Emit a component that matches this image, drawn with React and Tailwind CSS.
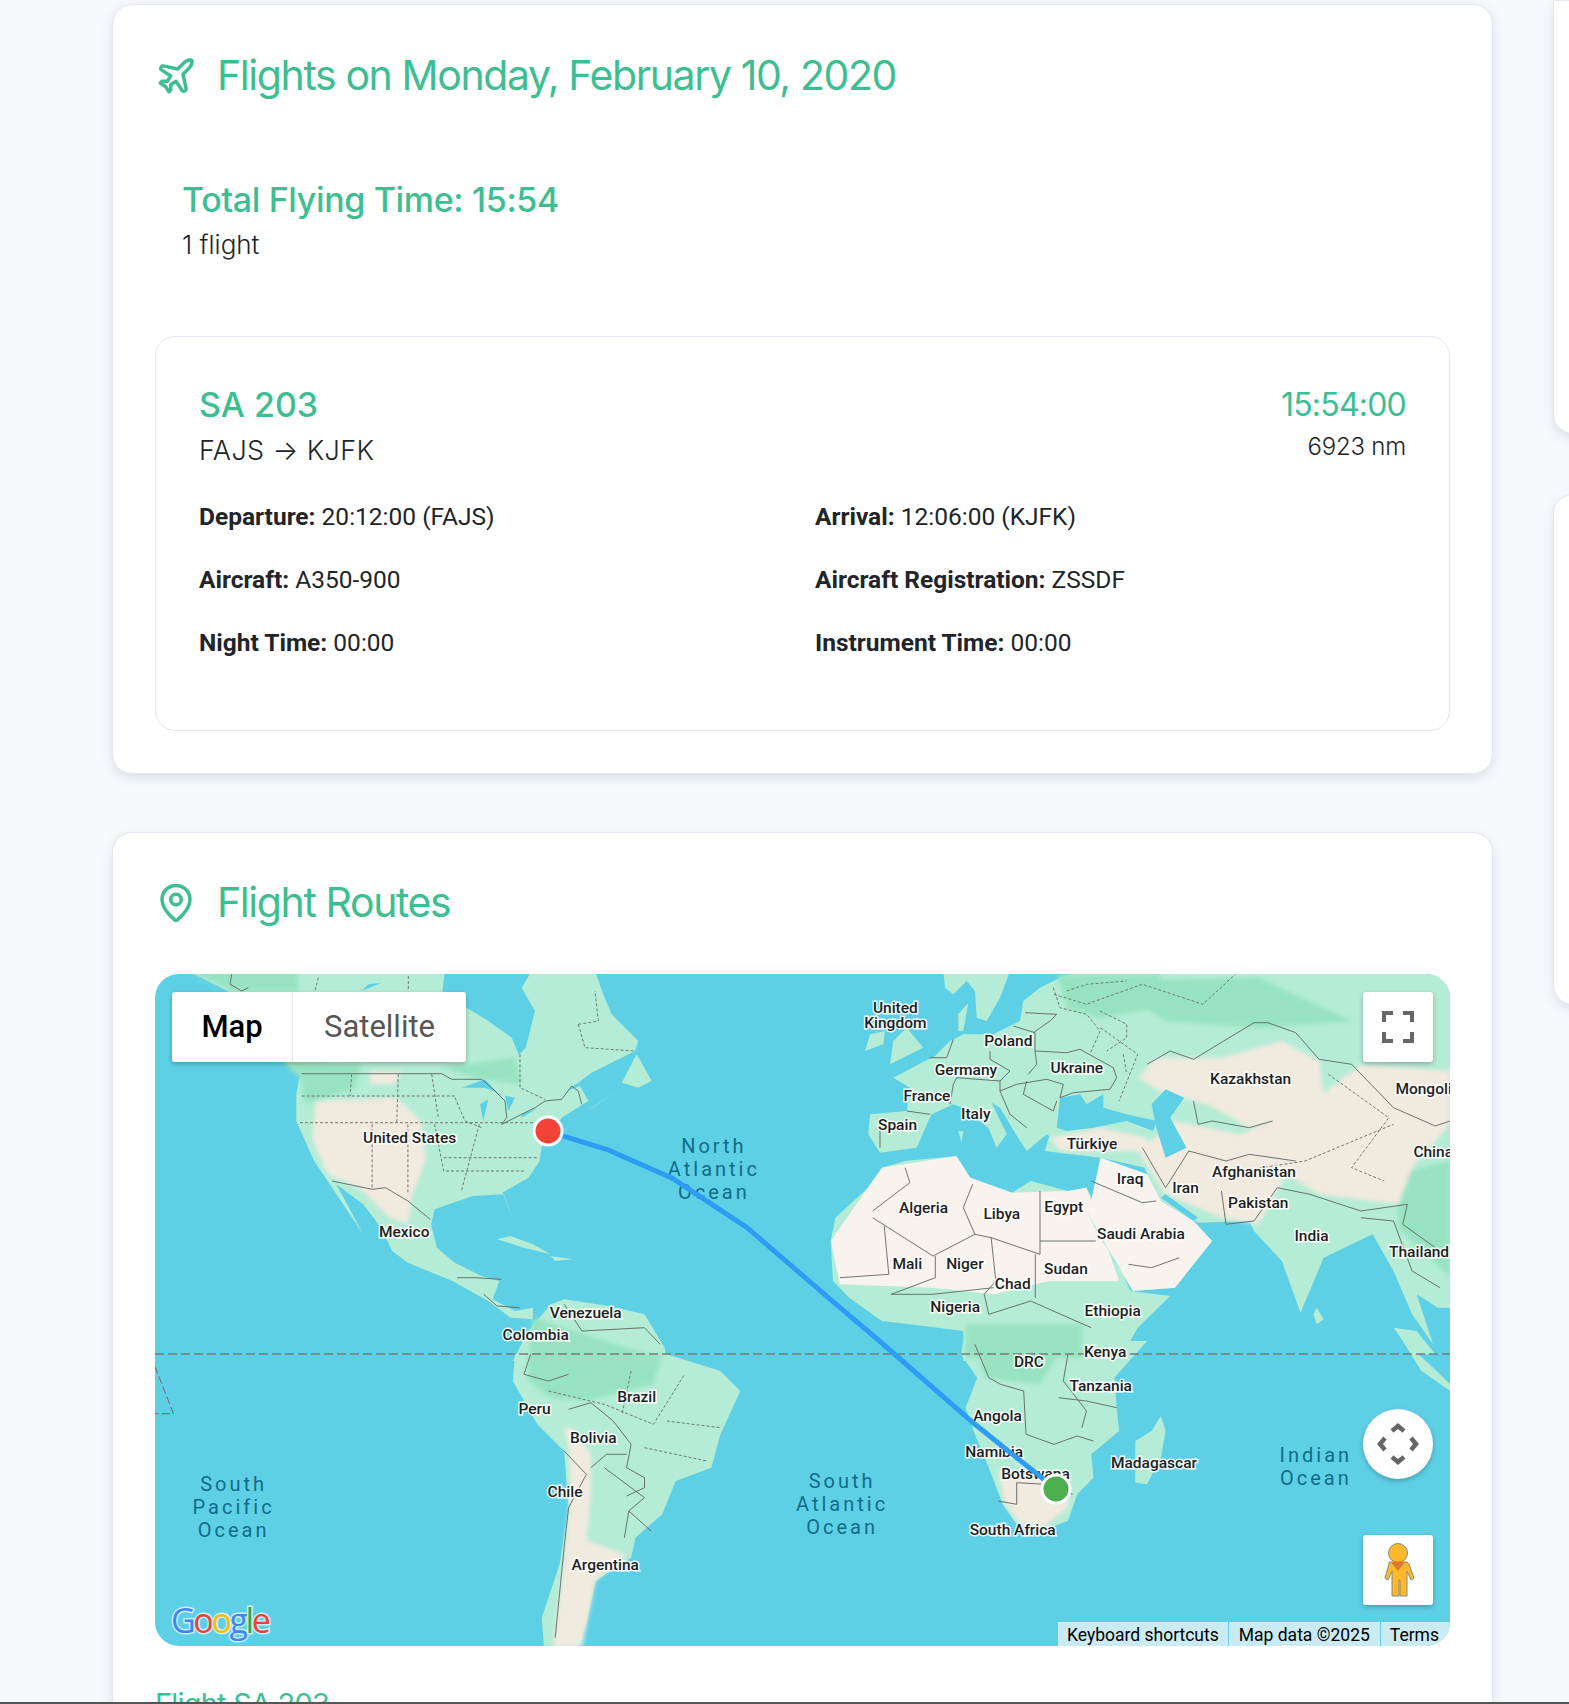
import { Plane, MapPin } from "lucide-react";

// the zoom crops have their own origin / scale, everything ends up in page px
const conv = (ox, oy, sx) => (p) => p.map(([x, y]) => `${(ox + x / sx).toFixed(1)},${(oy + y / 3).toFixed(1)}`).join(" ");
const fromA = conv(140, 960, 2.24);
const fromB = conv(840, 960, 2.15);
const fromC = conv(140, 1340, 2.24);
const fromD = conv(840, 1340, 2.15);
const fromE = conv(155, 970, 3); // canada / usa crop
const fromF = conv(860, 970, 3); // europe crop

const GREEN = "#b4ecd6";
const FOREST = "#97e3c1";
const SAND = "#f1eadf";
const CREAM = "#f8f3ee";
const SEA = "#5ed0e6";

const land = [
  // north america
  [
    fromE([[100, 0], [870, 0], [862, 60], [935, 110], [1000, 150], [1070, 200], [1092, 252], [1112, 230], [1140, 120], [1100, 50], [1130, 0], [1320, 0], [1345, 70], [1370, 130], [1450, 210], [1440, 240], [1310, 305], [1235, 360], [1275, 345], [1300, 390], [1220, 440], [1160, 525]]),
    fromA([[895, 600], [870, 650], [812, 695], [838, 785], [815, 700], [745, 705], [660, 745], [652, 790], [665, 860], [705, 905], [765, 945], [805, 960], [790, 1015], [840, 1050], [880, 1040], [880, 1075], [830, 1070], [780, 1020], [700, 960], [600, 905], [565, 870], [540, 800], [500, 730], [440, 670], [500, 820], [440, 700], [390, 600], [350, 480], [350, 400], [360, 330], [320, 300], [240, 120]]),
  ].join(" "),
  fromE([[1400, 335], [1445, 250], [1490, 330], [1450, 350]]),
  fromE([[1295, 420], [1385, 360], [1320, 405]]),
  fromA([[800, 835], [830, 825], [880, 850], [920, 880], [860, 860]]),
  fromA([[920, 885], [970, 895], [930, 900]]),
  // south america
  fromA([[835, 1200], [870, 1110], [920, 1030], [950, 1015], [1050, 1035], [1130, 1060], [1175, 1160], [1180, 1200]]),
  fromC([[1180, 40], [1300, 90], [1345, 150], [1300, 280], [1280, 380], [1200, 420], [1170, 520], [1110, 590], [1100, 650], [1020, 720], [1000, 850], [980, 917], [905, 917], [900, 830], [940, 670], [960, 500], [950, 330], [890, 250], [835, 120], [840, 40]]),
  // africa
  fromB([[-20, 840], [-10, 770], [60, 680], [90, 620], [140, 600], [250, 585], [280, 650], [370, 695], [410, 660], [490, 690], [530, 680], [545, 720], [580, 860], [625, 990], [710, 1005], [640, 1100], [600, 1200], [265, 1200], [265, 1110], [180, 1095], [90, 1080], [20, 1010], [-15, 960]]),
  fromD([[660, 0], [590, 110], [595, 200], [600, 270], [540, 340], [545, 410], [510, 460], [490, 540], [430, 570], [380, 550], [350, 490], [320, 380], [290, 280], [270, 200], [295, 110], [260, 40], [265, 0]]),
  fromD([[690, 225], [700, 270], [690, 350], [660, 430], [635, 425], [635, 300], [670, 270]]),
  // eurasia, east side from the wide crop, europe from the close one
  [
    fromF([[650, 0]]),
    fromB([[1312, 30], [1312, 1040], [1285, 1040], [1240, 1000], [1275, 1150], [1230, 1060], [1190, 930], [1145, 820], [1100, 850], [1040, 890], [990, 1055], [950, 900], [890, 810], [880, 780], [770, 785], [735, 760], [680, 710], [655, 620], [560, 590], [440, 570], [450, 525]]),
    fromF([[560, 490], [500, 540], [480, 510], [420, 410], [395, 395], [440, 490], [410, 530], [385, 470], [310, 410], [280, 400], [215, 430], [205, 450], [170, 530], [60, 545], [25, 490], [30, 430], [140, 420], [150, 350], [100, 320], [205, 265], [220, 260], [270, 210], [310, 190], [400, 190], [480, 150], [490, 90], [540, 50], [580, 30]]),
  ].join(" "),
  fromB([[540, 720], [560, 590], [660, 640], [690, 720], [760, 780], [800, 840], [720, 980], [630, 990], [590, 900], [545, 780]]),
  fromF([[250, 0], [450, 0], [420, 80], [380, 150], [350, 140], [345, 60], [320, 30], [280, 70], [255, 50]]),
  fromF([[295, 130], [325, 95], [310, 180], [295, 180]]),
  fromF([[100, 210], [140, 170], [190, 230], [90, 280]]),
  fromF([[15, 240], [30, 190], [75, 180], [70, 220]]),
  fromF([[295, 480], [310, 480], [305, 515]]),
  fromB([[1025, 1040], [1040, 1075], [1025, 1090], [1018, 1060]]),
  fromB([[1190, 1100], [1240, 1110], [1280, 1180], [1230, 1180]]),
  fromD([[1210, 0], [1260, 60], [1312, 130], [1312, 150], [1250, 90]]),
];

const forest = [
  fromE([[860, 290], [1080, 260], [1100, 340], [960, 320]]),
  fromE([[380, 270], [620, 280], [600, 350], [450, 400], [435, 320]]),
  fromE([[100, 0], [430, 0], [430, 60], [230, 60]]),
  fromA([[880, 1070], [1160, 1190], [870, 1190]]),
  fromC([[870, 40], [1170, 40], [1150, 130], [1000, 180], [920, 170], [870, 120]]),
  fromF([[590, 10], [900, 10], [900, 110], [720, 140], [620, 110]]),
  fromB([[560, 60], [900, 50], [1100, 180], [900, 200], [700, 180]]),
  fromB([[1200, 640], [1312, 600], [1312, 950], [1200, 800]]),
  fromB([[270, 1090], [520, 1090], [520, 1190], [270, 1190]]),
  fromD([[300, 40], [470, 40], [430, 130], [310, 110]]),
];

const sand = [
  fromA([[395, 420], [575, 410], [630, 480], [640, 600], [610, 700], [600, 790], [560, 770], [490, 680], [420, 640], [385, 530]]),
  fromE([[650, 300], [740, 300], [720, 340], [640, 340]]),
  fromC([[950, 260], [965, 260], [1010, 340], [1010, 470], [1000, 600], [1090, 640], [1020, 720], [990, 917], [925, 917], [950, 650], [965, 450], [960, 320]]),
  fromB([[640, 350], [680, 290], [820, 290], [950, 240], [1030, 300], [1040, 400], [1000, 450], [880, 500], [790, 430], [700, 400]]),
  fromB([[720, 480], [860, 520], [1000, 440], [1120, 310], [1312, 330], [1312, 490], [1230, 620], [1200, 730], [1030, 700], [960, 640], [900, 790], [820, 770], [700, 700], [640, 570]]),
  fromD([[340, 390], [440, 410], [490, 430], [490, 500], [440, 555], [385, 545], [355, 490]]),
  fromF([[570, 500], [720, 470], [860, 500], [860, 540], [600, 540]]),
];

const cream = [
  fromB([[-20, 840], [90, 620], [250, 585], [280, 650], [370, 695], [490, 690], [530, 680], [600, 960], [450, 960], [330, 1000], [200, 980], [0, 970]]),
  fromB([[540, 720], [560, 590], [660, 640], [690, 720], [760, 780], [800, 840], [720, 980], [630, 990], [590, 900], [545, 780]]),
];

const seas = [
  // black sea
  fromF([[590, 470], [600, 380], [660, 370], [680, 400], [730, 370], [730, 410], [800, 430], [890, 450], [880, 480], [800, 450], [700, 470], [620, 480]]),
  // caspian, gulf, red sea
  fromB([[670, 430], [700, 385], [740, 410], [710, 470], [745, 560], [700, 590], [680, 500]]),
  fromB([[690, 710], [760, 780], [770, 770], [700, 700]]),
  fromB([[530, 750], [590, 900], [610, 940], [560, 830]]),
  // great lakes
  fromE([[920, 350], [990, 325], [1030, 370], [1080, 380], [1060, 420], [1050, 375], [990, 350]]),
  fromE([[975, 400], [1000, 385], [985, 450]]),
  fromE([[1100, 430], [1150, 410], [1100, 440]]),
  fromE([[640, 40], [680, 35], [620, 60]]),
];

const borders = [
  fromE([[440, 308], [860, 308], [890, 325], [980, 325], [1010, 350], [1050, 390], [1055, 440], [1040, 460], [1100, 430], [1140, 410], [1170, 390], [1220, 385], [1250, 345], [1270, 360], [1280, 400]]),
  fromE([[230, 10], [225, 40], [260, 60], [280, 50]]),
  fromA([[430, 660], [520, 685], [550, 680], [600, 720], [650, 775]]),
  fromA([[710, 950], [750, 950], [810, 955]]),
  fromA([[770, 1000], [800, 1035], [850, 1040]]),
  fromC([[875, 40], [860, 100], [915, 120], [960, 100]]),
  fromC([[960, 205], [1010, 185], [1060, 240], [1100, 310], [1090, 380], [1130, 410], [1130, 440], [1090, 465]]),
  fromC([[1010, 380], [1045, 340], [1090, 340]]),
  fromC([[1040, 380], [1130, 470], [1095, 510], [1145, 570]]),
  fromC([[1095, 510], [1085, 590]]),
  fromC([[950, 330], [1000, 400], [960, 500], [950, 620], [930, 890]]),
  fromA([[950, 1030], [990, 1110], [1130, 1100], [1165, 1150]]),
  fromB([[70, 770], [200, 885], [290, 820], [325, 830], [430, 880], [430, 690]]),
  fromB([[290, 820], [265, 740], [285, 670]]),
  fromB([[140, 620], [150, 665], [70, 750]]),
  fromB([[95, 795], [105, 940], [0, 950]]),
  fromB([[205, 885], [205, 950], [110, 1000], [200, 1000], [330, 980]]),
  fromB([[325, 830], [335, 960], [310, 1000], [320, 1060], [410, 1020], [540, 1100]]),
  fromB([[420, 880], [420, 1010]]),
  fromB([[430, 840], [550, 840]]),
  fromB([[540, 660], [650, 725], [680, 720]]),
  fromB([[620, 910], [670, 920], [730, 890]]),
  fromF([[495, 125], [590, 130], [570, 150], [520, 185]]),
  fromF([[460, 165], [525, 185], [525, 240], [530, 280], [505, 310]]),
  fromF([[525, 240], [620, 245], [660, 235], [760, 290], [770, 320], [750, 355], [640, 365], [600, 380]]),
  fromF([[280, 205], [260, 260], [210, 260]]),
  fromF([[390, 240], [390, 265], [450, 300], [420, 330]]),
  fromF([[290, 320], [420, 330], [420, 360], [470, 340], [560, 325], [610, 340], [600, 380]]),
  fromF([[270, 400], [280, 340], [290, 320]]),
  fromF([[420, 360], [450, 430], [500, 470]]),
  fromF([[140, 420], [210, 430]]),
  fromF([[500, 330], [490, 370], [580, 420], [590, 390]]),
  fromF([[60, 460], [60, 530]]),
  fromB([[660, 310], [710, 270], [760, 295], [890, 185], [920, 185], [980, 215], [1030, 295], [1100, 310], [1190, 440], [1280, 495], [1312, 480]]),
  fromB([[760, 420], [770, 490], [800, 480], [880, 500], [930, 480]]),
  fromB([[650, 560], [700, 680], [750, 570], [830, 600], [880, 580], [980, 600]]),
  fromB([[820, 690], [830, 790], [890, 780], [940, 680], [1010, 700], [1120, 750], [1220, 730], [1210, 790], [1280, 860]]),
  fromB([[1120, 770], [1190, 780], [1230, 930], [1290, 980]]),
  fromD([[345, 130], [395, 150], [400, 280], [460, 310], [510, 285], [545, 300]]),
  fromD([[470, 170], [530, 180], [595, 200]]),
  fromD([[490, 40], [480, 120], [530, 210], [520, 260]]),
  fromD([[290, 10], [320, 110], [345, 130]]),
  fromD([[340, 480], [380, 490], [380, 425], [440, 430], [500, 460]]),
];

const dashed = [
  fromE([[440, 375], [900, 375]]),
  fromE([[435, 455], [1140, 455]]),
  fromE([[730, 310], [725, 460]]),
  fromE([[830, 310], [850, 440]]),
  fromE([[590, 310], [585, 375]]),
  fromE([[1095, 250], [1095, 350], [1170, 385]]),
  fromE([[1270, 160], [1290, 230], [1440, 240]]),
  fromE([[1270, 160], [1330, 150], [1320, 60]]),
  fromE([[490, 20], [480, 60]]),
  fromE([[760, 15], [760, 60]]),
  fromE([[900, 380], [930, 450], [980, 470]]),
  fromA([[520, 490], [520, 680]]),
  fromA([[600, 490], [600, 700]]),
  fromA([[660, 490], [680, 630], [860, 630]]),
  fromA([[760, 490], [720, 690]]),
  fromA([[680, 590], [890, 590]]),
  fromC([[1100, 90], [1080, 220]]),
  fromC([[915, 150], [1040, 190], [1150, 250], [1220, 100]]),
  fromC([[1180, 240], [1300, 260]]),
  fromC([[1130, 320], [1270, 360]]),
  fromF([[580, 50], [600, 110], [680, 130], [720, 180], [690, 250]]),
  fromF([[620, 60], [680, 40], [800, 30]]),
  fromF([[720, 120], [800, 160], [800, 200], [740, 240]]),
  fromF([[790, 250], [800, 310]]),
  fromB([[460, 100], [530, 130], [650, 70], [780, 130], [850, 40]]),
  fromB([[560, 200], [640, 280], [600, 420]]),
  fromB([[1050, 340], [1180, 470], [1100, 620], [1170, 660]]),
  fromB([[860, 630], [1000, 600], [1190, 490]]),
];

// centres read off the shrunk screenshot, multiplied up when drawn
const labels = [
  ["United", 824, 927], ["Kingdom", 824, 941], ["Poland", 928, 958], ["Germany", 889, 984], ["Ukraine", 991, 982],
  ["Kazakhstan", 1151, 993], ["France", 853, 1008], ["Italy", 898, 1025], ["Spain", 826, 1035], ["Türkiye", 1005, 1052],
  ["Iraq", 1040, 1085], ["Iran", 1091, 1093], ["Afghanistan", 1154, 1078], ["Pakistan", 1158, 1107], ["Algeria", 850, 1111],
  ["Libya", 922, 1117], ["Egypt", 979, 1110], ["Saudi Arabia", 1050, 1135], ["India", 1207, 1137], ["Mali", 835, 1163],
  ["Niger", 888, 1163], ["Sudan", 981, 1167], ["Chad", 932, 1181], ["Nigeria", 879, 1202], ["Ethiopia", 1024, 1206],
  ["Kenya", 1017, 1244], ["DRC", 947, 1253], ["Tanzania", 1013, 1275], ["Angola", 918, 1303], ["Namibia", 915, 1336],
  ["Botswana", 953, 1356], ["Madagascar", 1062, 1346], ["South Africa", 932, 1408], ["United States", 377, 1047],
  ["Mexico", 372, 1133], ["Venezuela", 539, 1208], ["Colombia", 493, 1228], ["Brazil", 586, 1285], ["Peru", 492, 1296],
  ["Bolivia", 546, 1323], ["Chile", 520, 1373], ["Argentina", 557, 1440], ["Mongolia", 1314, 1002], ["China", 1319, 1060],
  ["Thailand", 1306, 1152],
];

const oceans = [
  ["North", 657, 1055], ["Atlantic", 657, 1076], ["Ocean", 657, 1097],
  ["South", 215, 1366], ["Pacific", 215, 1387], ["Ocean", 215, 1408],
  ["South", 775, 1363], ["Atlantic", 775, 1384], ["Ocean", 775, 1405],
  ["Indian", 1211, 1339], ["Ocean", 1211, 1360],
];

const K = 1.0866;

function WorldMap() {
  return (
    <svg viewBox="155 973 1295 672" className="absolute inset-0 w-full h-full">
      <defs>
        <filter id="soft" x="-5%" y="-5%" width="110%" height="110%">
          <feGaussianBlur stdDeviation="2" />
        </filter>
      </defs>
      <rect x="155" y="973" width="1295" height="672" fill={SEA} />
      {land.map((p, i) => <polygon key={i} points={p} fill={GREEN} />)}
      <g filter="url(#soft)">
        {forest.map((p, i) => <polygon key={i} points={p} fill={FOREST} />)}
        {sand.map((p, i) => <polygon key={i} points={p} fill={SAND} />)}
      </g>
      {cream.map((p, i) => <polygon key={i} points={p} fill={CREAM} />)}
      {seas.map((p, i) => <polygon key={i} points={p} fill={SEA} />)}
      {dashed.map((p, i) => (
        <polyline key={i} points={p} fill="none" stroke="#6f7a78" strokeWidth="1" strokeDasharray="3 2" />
      ))}
      {borders.map((p, i) => <polyline key={i} points={p} fill="none" stroke="#5d6664" strokeWidth="0.9" />)}

      {/* equator + date line */}
      <line x1="155" y1="1353" x2="1450" y2="1353" stroke="#7b7b7b" strokeWidth="1.5" strokeDasharray="9 4" />
      <polyline points={fromC([[33, 75], [75, 218], [33, 218]])} fill="none" stroke="#8a5a66" strokeWidth="1" strokeDasharray="8 3" />

      {oceans.map(([t, x, y], i) => (
        <text key={i} x={x * K} y={y * K + 6} textAnchor="middle" fill="#0f6d89" fontSize="20" letterSpacing="3" fontFamily="Roboto, sans-serif">
          {t}
        </text>
      ))}
      {labels.map(([t, x, y], i) => (
        <text
          key={i}
          x={x * K}
          y={y * K + 4.5}
          textAnchor="middle"
          fill="#1c1f22"
          stroke="#fff"
          strokeWidth="3"
          strokeOpacity="0.9"
          paintOrder="stroke"
          fontSize="15.5"
          fontWeight="500"
          fontFamily="Roboto, sans-serif"
        >
          {t}
        </text>
      ))}

      {/* route FAJS -> KJFK */}
      <polyline
        points={[
          fromA([[930, 518], [1045, 565], [1190, 650], [1360, 800], [1568, 1040]]),
          fromD([[85, 0], [290, 250], [465, 445]]),
        ].join(" ")}
        fill="none"
        stroke="#2f9cf4"
        strokeWidth="5"
        strokeLinejoin="round"
      />
      <circle cx="548" cy="1130" r="14" fill="#f44336" stroke="#fff" strokeWidth="3" />
      <circle cx="1056" cy="1488" r="14" fill="#4caf50" stroke="#fff" strokeWidth="3" />

      {/* google logo, real letters with a pale halo */}
      <text x="171" y="1632" fontSize="34" fontFamily="'Open Sans', sans-serif" fontWeight="500" letterSpacing="-2.4" stroke="#c8f0f7" strokeWidth="3" paintOrder="stroke">
        <tspan fill="#4285f4">G</tspan>
        <tspan fill="#ea4335">o</tspan>
        <tspan fill="#fbbc05">o</tspan>
        <tspan fill="#4285f4">g</tspan>
        <tspan fill="#34a853">l</tspan>
        <tspan fill="#ea4335">e</tspan>
      </text>
    </svg>
  );
}

function Pegman() {
  return (
    <svg width="36" height="56" viewBox="0 0 36 56">
      <circle cx="18" cy="11" r="9.5" fill="#fdb92b" stroke="#888" strokeWidth="1" />
      <path
        d="M9 20h18l2 2 5 14-3 2-4-9v25h-7V38h-1v16H12V29l-4 9-3-2 4-14z"
        fill="#fdb92b"
        stroke="#888"
        strokeWidth="1"
        strokeLinejoin="round"
      />
      <path d="M11 20h14l-7 9z" fill="#e0792a" />
    </svg>
  );
}

function Detail({ label, value }) {
  return (
    <p className="text-[24.5px] leading-[36px] text-[#212529]">
      <span className="font-bold">{label}:</span> <span className="font-normal">{value}</span>
    </p>
  );
}

function MapButtons() {
  return (
    <>
      <div className="absolute left-[17px] top-[18px] h-[70px] w-[294px] flex bg-white rounded-[3px] shadow-[0_2px_5px_rgba(0,0,0,0.25)] text-[31px] font-['Roboto',sans-serif]">
        <div className="w-[121px] flex items-center justify-center font-medium text-black border-r border-[#e6e6e6]">Map</div>
        <div className="flex-1 flex items-center justify-center text-[#565656]">Satellite</div>
      </div>
      <div className="absolute right-[17px] top-[18px] w-[70px] h-[70px] bg-white rounded-[3px] flex items-center justify-center shadow-[0_2px_5px_rgba(0,0,0,0.25)]">
        <svg width="32" height="32" viewBox="0 0 32 32" fill="none" stroke="#666" strokeWidth="4">
          <path d="M2 11V2h9M21 2h9v9M30 21v9h-9M11 30H2v-9" />
        </svg>
      </div>
      <div className="absolute right-[17px] top-[435px] w-[70px] h-[70px] bg-white rounded-full flex items-center justify-center shadow-[0_2px_5px_rgba(0,0,0,0.25)]">
        <svg width="42" height="42" viewBox="0 0 42 42" fill="none" stroke="#666" strokeWidth="4.5">
          <path d="M15 8l6-5 6 5M15 34l6 5 6-5M8 15l-5 6 5 6M34 15l5 6-5 6" />
        </svg>
      </div>
      <div className="absolute right-[17px] top-[561px] w-[70px] h-[70px] bg-white rounded-[3px] flex items-center justify-center shadow-[0_2px_5px_rgba(0,0,0,0.25)]">
        <Pegman />
      </div>
      <div className="absolute right-0 bottom-0 h-[24px] flex text-[17.5px] leading-[27px] text-black font-['Roboto',sans-serif] gap-px">
        <span className="px-[9px] bg-[#cbebf3]">Keyboard shortcuts</span>
        <span className="px-[10px] bg-[#cbebf3]">Map data ©2025</span>
        <span className="pl-[9px] pr-[11px] bg-[#cbebf3]">Terms</span>
      </div>
    </>
  );
}

export default function App() {
  const card = "bg-white border border-[#e3e7f1] shadow-[0_4px_12px_rgba(60,70,110,0.14)]";
  const heading = "font-['Inter',sans-serif] text-[#3dbe92]";
  const light = "font-['Inter',sans-serif] font-light text-[#212529]";

  return (
    <div className="h-[1704px] w-[1569px] overflow-hidden bg-[#f8f9fc] flex flex-col font-['Roboto',sans-serif]">
      <div className="flex-1 min-h-0 flex overflow-hidden">
        <main className="w-[1381px] ml-[112px] shrink-0 pt-[4px] flex flex-col gap-[58px]">
          <section className={`${card} h-[770px] rounded-[20px] px-[42px] shrink-0`}>
            <div className={`${heading} mt-[45px] h-[52px] flex items-center gap-[20px] text-[41px] font-normal tracking-[-1.4px] whitespace-nowrap`}>
              <Plane size={42} strokeWidth={2} />
              <h1>Flights on Monday, February 10, 2020</h1>
            </div>
            <div className="mt-[76px] pl-[27px]">
              <h2 className={`${heading} text-[34px] leading-[44px] font-medium tracking-[-0.35px]`}>Total Flying Time: 15:54</h2>
              <p className={`${light} text-[26px] leading-[36px] mt-[5px]`}>1 flight</p>
            </div>
            <div className="mt-[73px] h-[395px] border border-[#e3e7f1] rounded-[20px] px-[43px] pt-[46px]">
              <div className="flex justify-between">
                <div>
                  <h3 className={`${heading} text-[34px] leading-[44px] font-medium`}>SA 203</h3>
                  <p className={`${light} text-[27px] leading-[36px] mt-[6px] tracking-[0.4px]`}>FAJS → KJFK</p>
                </div>
                <div className="text-right">
                  <p className={`${heading} text-[32px] leading-[44px] tracking-[-0.8px]`}>15:54:00</p>
                  <p className={`${light} text-[24px] leading-[36px] mt-[2px] tracking-[-0.2px]`}>6923 nm</p>
                </div>
              </div>
              <div className="mt-[30px] grid grid-cols-2 gap-x-[25px] gap-y-[27px]">
                <Detail label="Departure" value="20:12:00 (FAJS)" />
                <Detail label="Arrival" value="12:06:00 (KJFK)" />
                <Detail label="Aircraft" value="A350-900" />
                <Detail label="Aircraft Registration" value="ZSSDF" />
                <Detail label="Night Time" value="00:00" />
                <Detail label="Instrument Time" value="00:00" />
              </div>
            </div>
          </section>

          <section className={`${card} rounded-t-[20px] px-[42px] flex-1`}>
            <div className={`${heading} mt-[44px] h-[52px] flex items-center gap-[20px] text-[41px] tracking-[-1.4px]`}>
              <MapPin size={42} strokeWidth={2} />
              <h2>Flight Routes</h2>
            </div>
            <div className="mt-[45px] relative h-[672px] rounded-[24px] overflow-hidden">
              <WorldMap />
              <MapButtons />
            </div>
            <p className={`${heading} mt-[38px] text-[29px] leading-[40px] tracking-[-0.8px]`}>Flight SA 203</p>
          </section>
        </main>

        <aside className="ml-[60px] flex-1 flex flex-col gap-[60px]">
          <div className={`${card} h-[434px] w-[200px] rounded-b-[20px] shrink-0`} />
          <div className={`${card} h-[511px] w-[200px] rounded-[20px] shrink-0`} />
        </aside>
      </div>
      <div className="h-[2px] bg-[#555] shrink-0" />
    </div>
  );
}
